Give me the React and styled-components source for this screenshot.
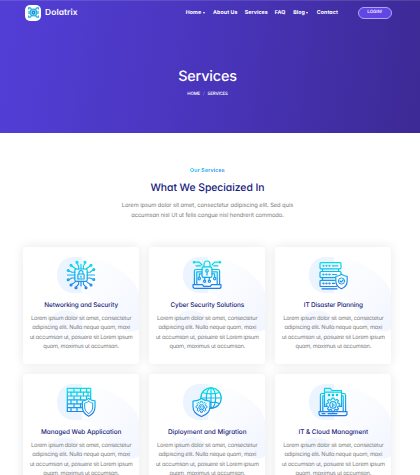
import React from "react";
import styled, { createGlobalStyle } from "styled-components";

const GlobalStyle = createGlobalStyle`
  * { box-sizing: border-box; }
  html, body { margin: 0; padding: 0; }
  body {
    width: 420px;
    height: 475px;
    overflow: hidden;
    background: #fff;
    font-family: Inter, "Open Sans", sans-serif;
    font-feature-settings: "cv11" 1;
    text-rendering: geometricPrecision;
  }
`;

const Page = styled.div`
  width: 420px;
  height: 475px;
  overflow: hidden;
`;

const Hero = styled.header`
  height: 133px;
  display: flex;
  flex-direction: column;
  color: #fff;
  border-top: 1px solid rgba(255, 255, 255, 0.12);
  background: linear-gradient(98deg, #523ed5 2%, #4a36be 45%, #3d2a96 98%);
`;

const NavBar = styled.div`
  height: 23px;
  display: flex;
  align-items: center;
  padding-left: 25.3px;
`;

const LogoMark = styled.div`
  width: 16px;
  height: 16px;
  border-radius: 5px;
  background: #fff;
  display: flex;
  align-items: center;
  justify-content: center;
`;

const Brand = styled.div`
  width: 140.7px;
  margin-left: 3.8px;
  font-size: 8.4px;
  font-weight: 600;
  letter-spacing: ${(p) => p.$track}px;
`;

const Menu = styled.nav`
  width: 172px;
  display: flex;
  padding-top: 1px;
`;

const MenuItem = styled.a`
  width: ${(p) => p.$w}px;
  flex: none;
  display: flex;
  align-items: center;
  white-space: nowrap;
  font-size: 5.3px;
  line-height: 8px;
  font-weight: 700;
  letter-spacing: ${(p) => p.$track}px;
`;

const Caret = styled.span`
  margin-left: 1.4px;
  margin-bottom: 1px;
  border: 1.5px solid transparent;
  border-top: 2px solid #fff;
  border-bottom: 0;
`;

const Login = styled.a`
  width: 34px;
  height: 12px;
  display: flex;
  align-items: center;
  justify-content: center;
  border: 0.8px solid #b0a4f4;
  border-radius: 6px;
  background: #6146e4;
  font-size: 4.4px;
  line-height: 6px;
  padding-top: 1.4px;
  font-weight: 500;
  letter-spacing: 0;
`;

const HeroTitle = styled.h1`
  margin: 43px 0 0;
  text-align: center;
  padding-right: 5px;
  font-size: 14.4px;
  line-height: 20px;
  font-weight: 500;
  letter-spacing: ${(p) => p.$track}px;
`;

const Crumbs = styled.div`
  display: flex;
  justify-content: center;
  gap: 3px;
  padding-right: 5px;
  margin-top: 4.4px;
  font-size: 4.5px;
  line-height: 8px;
  font-weight: 500;
  letter-spacing: -0.2px;
`;

const Slash = styled.span`
  opacity: 0.35;
`;

const Intro = styled.section`
  padding: 33px 5px 0 0;
  display: flex;
  flex-direction: column;
  align-items: center;
`;

const Eyebrow = styled.div`
  font-size: 5.5px;
  line-height: 10px;
  font-weight: 700;
  letter-spacing: ${(p) => p.$track}px;
  color: transparent;
  background: linear-gradient(90deg, #25cdf2, #4c8df0);
  background-clip: text;
`;

const Heading = styled.h2`
  margin: 4.4px 0 0;
  font-size: 10.4px;
  line-height: 15px;
  font-weight: 500;
  letter-spacing: ${(p) => p.$track}px;
  color: #14207c;
`;

const Line = styled.div`
  white-space: nowrap;
  color: #7d7d7d;
  font-size: ${(p) => p.$size}px;
  line-height: ${(p) => p.$lh}px;
  letter-spacing: ${(p) => p.$track}px;
`;

const IntroText = styled.div`
  margin-top: 5.2px;
  text-align: center;
`;

const Cards = styled.section`
  display: grid;
  grid-template-columns: repeat(3, 116.3px);
  grid-auto-rows: 117px;
  column-gap: 9.8px;
  row-gap: 10px;
  padding: 25.4px 0 0 23px;
`;

const Card = styled.article`
  position: relative;
  border-radius: 3px;
  background: #fff;
  box-shadow: 0 0 11px rgba(30, 30, 50, 0.1);
  display: flex;
  flex-direction: column;
  align-items: center;
  padding-top: 13px;
`;

const Blob = styled.svg`
  position: absolute;
  inset: 0;
`;

const IconSvg = styled.svg`
  position: relative;
  flex: none;
`;

const CardTitle = styled.h3`
  position: relative;
  margin: 10px 0 3.9px;
  font-size: 6.4px;
  line-height: 10px;
  font-weight: 500;
  white-space: nowrap;
  letter-spacing: ${(p) => p.$track}px;
  color: #14207c;
`;

const CardText = styled.div`
  position: relative;
  text-align: center;
`;

function CardBlob({ id }) {
  return (
    <Blob width="116.3" height="117" viewBox="0 0 116.3 117">
      <defs>
        <linearGradient id={`${id}r`} x1="0" y1="0" x2="1" y2="1">
          <stop offset="0.1" stopColor="#f6f9ff" stopOpacity="0.2" />
          <stop offset="1" stopColor="#f1f5ff" />
        </linearGradient>
        <linearGradient id={`${id}b`} x1="0" y1="0" x2="0" y2="1">
          <stop offset="0" stopColor="#f1f6ff" />
          <stop offset="1" stopColor="#f1f6ff" stopOpacity="0" />
        </linearGradient>
      </defs>
      <path d="M59 10H51C40 10 34 18 34 28s6 18 17 18h8z" fill="#ebf4ff" />
      <path d="M59 10C85 12 112 28 116.3 47V82C109 87 96 84 89 77C80 68 78 51 59 46z" fill={`url(#${id}r)`} />
      <path d="M25 80C26 67 36 62 46 64C58 66 62 76 61 92L58 109C42 106 26 97 25 80z" fill={`url(#${id}b)`} />
    </Blob>
  );
}

function Icon({ id, children }) {
  return (
    <IconSvg width="30" height="30" viewBox="0 0 30 30" fill="none" stroke={`url(#${id}g)`} strokeWidth="1.2" strokeLinejoin="round" strokeLinecap="round">
      <defs>
        <linearGradient id={`${id}g`} gradientUnits="userSpaceOnUse" x1="15" y1="1" x2="15" y2="29">
          <stop offset="0" stopColor="#00e2e6" />
          <stop offset="0.5" stopColor="#0fb0ea" />
          <stop offset="1" stopColor="#2377e9" />
        </linearGradient>
      </defs>
      {children}
    </IconSvg>
  );
}

const gear = "M13.8 8h2.4l.5 2 1.6.7 1.8-1.1 1.7 1.7-1.1 1.8.7 1.6 2 .5v2.4l-2 .5-.7 1.6 1.1 1.8-1.7 1.7-1.8-1.1-1.6.7-.5 2h-2.4l-.5-2-1.6-.7-1.8 1.1-1.7-1.7 1.1-1.8-.7-1.6-2-.5v-2.4l2-.5.7-1.6-1.1-1.8 1.7-1.7 1.8 1.1 1.6-.7z";

const chipDots = [
  [11, 2.2], [19, 2.2], [5, 5.2], [25, 5.2], [2.2, 10.5], [27.8, 9.5],
  [2.2, 19.8], [27.8, 19.5], [5, 25], [25, 25], [10, 27.8], [20, 27.8],
];

const icons = {
  chip: (
    <>
      <rect x="8.8" y="9" width="12.4" height="12.4" rx="1.6" />
      <path d="M11 3.2l1.6 3V9M19 3.2l-1.6 3V9M15 4.2V9M5.8 6l4.2 3M24.2 6L20 9M3.2 10.9L6 12.2h2.8M26.8 10l-2.6 2.2h-3M1.5 15h7.3M21.2 15h7.3M3.2 19.4L6 18h2.8M26.8 19.2L24 18h-2.8M5.8 24.2L10 21.4M24.2 24.2L20 21.4M10.3 26.8l2.3-2.6v-2.8M19.7 26.8l-2.3-2.6v-2.8M15 21.4V26" strokeWidth="1.1" />
      {chipDots.map(([x, y]) => <circle key={`${x}-${y}`} cx={x} cy={y} r="0.95" />)}
      <rect x="11.9" y="14" width="6.2" height="5" rx="0.6" />
      <path d="M13 14v-1.3a2 2 0 0 1 4 0V14M15 16v1.3" />
    </>
  ),
  laptopLock: (
    <>
      <path d="M10.5 9.5H4Q2.4 9.5 2.4 11v13.5M19.5 9.5H26q1.6 0 1.6 1.5v13.5M10 11.8H4.8v12.7M20 11.8h5.2v12.7" />
      <path d="M1 24.6h9.5l1.2 1.7h6.6l1.2-1.7H29v1.8q0 2-2 2H3q-2 0-2-2z" />
      <rect x="10" y="6.8" width="10" height="10.6" rx="1.6" />
      <path d="M12 6.8V4a3 3 0 0 1 6 0v2.8M15 12v3" />
      <circle cx="15" cy="10.7" r="1.3" />
      <path d="M2.5 2.2h4.8L10 5M27.5 2.2h-4.8L20 5M4 5.8h4.5M26 5.8h-4.5M7.3 17v-3.2H10M22.7 17v-3.2H20M12.7 17.5v2.6M17.3 17.5v2.6" />
      <circle cx="2" cy="2.2" r="0.7" />
      <circle cx="28" cy="2.2" r="0.7" />
      <circle cx="7.3" cy="18.6" r="1.2" />
      <circle cx="22.7" cy="18.6" r="1.2" />
      <circle cx="12.6" cy="21.2" r="1.1" />
      <circle cx="17.4" cy="21.2" r="1.1" />
    </>
  ),
  servers: (
    <>
      <path d="M3 2.7h19q1 0 1 1v4.1q0 1-1 1H3q-1 0-1-1V3.7q0-1 1-1zM3 11.5h19q1 0 1 1v2M17.5 17.6H3q-1 0-1-1v-4.1q0-1 1-1M17 20.3H3q-1 0-1 1v4.2q0 1 1 1h15.5M4.5 8.8v2.7M20.5 8.8v2.7M4.5 17.6v2.7M4 28.8h15" />
      <path d="M14.5 5.8H20M14.5 14.5h4M14.5 23.4h2" />
      {[5.8, 14.5, 23.4].map((y) => (
        <g key={y} strokeWidth="1">
          <circle cx="5.3" cy={y} r="0.6" /><circle cx="8.3" cy={y} r="0.6" /><circle cx="11.3" cy={y} r="0.6" />
        </g>
      ))}
      <path d="M23.5 14.3c2 1.5 3.7 2 5.7 2v4.4c0 4-2.6 6.7-5.7 8.1c-3.1-1.4-5.7-4.1-5.7-8.1v-4.4c2 0 3.7-.5 5.7-2z" fill="#fff" />
      <circle cx="23.5" cy="21" r="3.1" strokeWidth="1" />
      <path d="M22 21l1.1 1.1 2-2.1" />
    </>
  ),
  wall: (
    <>
      <path d="M17 24.5H1.3V1.3h23.4V13M1.3 5.2h23.4M1.3 9h23.4M1.3 12.9h18M1.3 16.8h15M1.3 20.6h15" />
      <path d="M8 1.3v3.9M14.5 1.3v3.9M20.5 1.3v3.9M5 5.2V9M11 5.2V9M17.5 5.2V9M22 5.2V9M8 9v3.9M14.5 9v3.9M20.5 9v3M5 12.9v3.9M11 12.9v3.9M8 16.8v3.8M14.5 16.8v3.8M5 20.6v3.9M11 20.6v3.9" />
      <path d="M22.7 11.5c2 1.6 4 2.3 6.3 2.3v6c0 4.4-2.6 7.6-6.3 9.4c-3.7-1.8-6.3-5-6.3-9.4v-6c2.3 0 4.3-.7 6.3-2.3z" fill="#fff" />
      <path d="M22.7 14.3c1.3 1 2.6 1.5 4 1.7v4c0 3-1.6 5.2-4 6.6c-2.4-1.4-4-3.6-4-6.6v-4c1.4-.2 2.7-.7 4-1.7z" strokeWidth="1" />
    </>
  ),
  globe: (
    <>
      <circle cx="19" cy="11" r="10.2" />
      <ellipse cx="19" cy="11" rx="4.7" ry="10.2" />
      <path d="M19 .8v20.4M8.8 11h20.4M10.5 5.5c4 1.8 13 1.8 17 0M10.5 16.5c4-1.8 13-1.8 17 0" />
      <path d="M9.5 11.6c2.4 1.8 5 2.5 8.5 2.6v5.3c0 5-3.2 8.2-8.5 10c-5.3-1.8-8.5-5-8.5-10v-5.3c3.5-.1 6.1-.8 8.5-2.6z" fill="#f4f8ff" />
      <path d={gear} transform="translate(-.25 9.2) scale(.65)" strokeWidth="1.5" />
      <circle cx="9.5" cy="20.2" r="2.7" strokeWidth="1" />
      <path d="M10.2 19.3a1.2 1.2 0 1 0 0 1.8" strokeWidth="1" />
    </>
  ),
  cloudLaptop: (
    <>
      <path d="M6 6.5H4Q2.4 6.5 2.4 8v16.5M24 6.5h2q1.6 0 1.6 1.5v16.5M6 8.8H4.8v15.7M24 8.8h1.2v15.7" />
      <path d="M1 24.6h28v2q0 2-2 2H3q-2 0-2-2zM4 26.6h3M10 26.6h9" />
      <path d="M8.5 19.5H6.5V1.3h5.8l1.6 2.2h9.6v16h-2M6.5 5.2h17" />
      <path d={gear} transform="translate(3 4.7) scale(.8)" fill="#fff" strokeWidth="1.5" />
      <circle cx="15" cy="17.9" r="3.2" />
      <path d="M14.3 19.5v-3.2l2 1.6z" strokeWidth="1" />
      <circle cx="11" cy="8" r=".7" /><circle cx="15" cy="8" r=".7" /><circle cx="19" cy="8" r=".7" />
    </>
  ),
};

const paragraph = [
  "Lorem ipsum dolor sit amet, consectetur",
  "adipiscing elit. Nulla neque quam, maxi",
  "ut accumsan ut, posuere sit Lorem ipsum",
  "quam, maximus ut accumsan.",
];

const cards = [
  { icon: "chip", title: "Networking and Security", track: -0.11 },
  { icon: "laptopLock", title: "Cyber Security Solutions", track: -0.1 },
  { icon: "servers", title: "IT Disaster Planning", track: -0.12 },
  { icon: "wall", title: "Managed Web Application", track: -0.04 },
  { icon: "globe", title: "Diployment and Migration", track: -0.02 },
  { icon: "cloudLaptop", title: "IT & Cloud Managment", track: -0.02 },
];

const menu = [
  ["Home", 27.3, true], ["About Us", 31.6], ["Services", 30.2], ["FAQ", 18.3],
  ["Blog", 23.6, true], ["Contact", 24],
];

export default function App() {
  return (
    <Page>
      <GlobalStyle />
      <Hero>
        <NavBar>
          <LogoMark>
            <svg width="11" height="11" viewBox="0 0 11 11" fill="none" stroke="#22b5e0" strokeWidth="1.2">
              <circle cx="5.5" cy="5.5" r="3.3" fill="#8adff0" />
              <circle cx="5.5" cy="5.5" r="1.3" stroke="#2585d8" />
              <path d="M.6 2.6V.8h1.7l1.2 1.6M10.4 2.6V.8H8.7L7.5 2.4M.6 8.4v1.8h1.7l1.2-1.6M10.4 8.4v1.8H8.7L7.5 8.6M1 4v3M10 4v3" />
            </svg>
          </LogoMark>
          <Brand $track={0.08}>Dolatrix</Brand>
          <Menu>
            {menu.map(([label, w, caret]) => (
              <MenuItem key={label} $w={w} $track={0.06}>{label}{caret && <Caret />}</MenuItem>
            ))}
          </Menu>
          <Login>LOGIN!</Login>
        </NavBar>
        <HeroTitle $track={-0.15}>Services</HeroTitle>
        <Crumbs><span>HOME</span><Slash>/</Slash><span>SERVICES</span></Crumbs>
      </Hero>
      <Intro>
        <Eyebrow $track={0}>Our Services</Eyebrow>
        <Heading $track={-0.05}>What We Speciaized In</Heading>
        <IntroText>
          <Line $size={5.8} $lh={10.6} $track={-0.09}>Lorem ipsum dolor sit amet, consectetur adipiscing elit. Sed quis</Line>
          <Line $size={5.8} $lh={10.6} $track={-0.09}>accumsan nisl Ut ut felis congue nisl hendrerit commodo.</Line>
        </IntroText>
      </Intro>
      <Cards>
        {cards.map((c) => (
          <Card key={c.icon}>
            <CardBlob id={c.icon} />
            <Icon id={c.icon}>{icons[c.icon]}</Icon>
            <CardTitle $track={c.track}>{c.title}</CardTitle>
            <CardText>
              {paragraph.map((t) => <Line key={t} $size={5.7} $lh={9.33} $track={-0.21}>{t}</Line>)}
            </CardText>
          </Card>
        ))}
      </Cards>
    </Page>
  );
}
